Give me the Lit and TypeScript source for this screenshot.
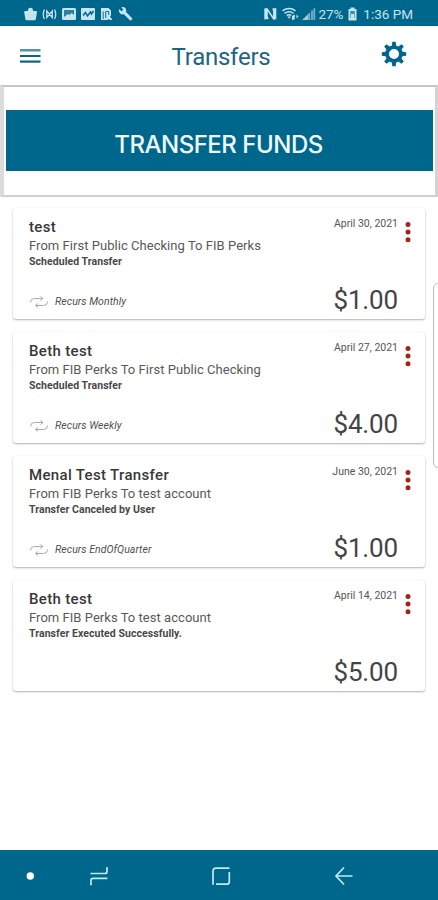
import { LitElement, html, css, svg, nothing } from "lit";
import { customElement, property } from "lit/decorators.js";

interface Transfer {
  name: string;
  route: string;
  status: string;
  date: string;
  amount: string;
  recurs?: string;
}

const TRANSFERS: Transfer[] = [
  { name: "test", route: "From First Public Checking To FIB Perks", status: "Scheduled Transfer", date: "April 30, 2021", amount: "$1.00", recurs: "Recurs Monthly" },
  { name: "Beth test", route: "From FIB Perks To First Public Checking", status: "Scheduled Transfer", date: "April 27, 2021", amount: "$4.00", recurs: "Recurs Weekly" },
  { name: "Menal Test Transfer", route: "From FIB Perks To test account", status: "Transfer Canceled by User", date: "June 30, 2021", amount: "$1.00", recurs: "Recurs EndOfQuarter" },
  { name: "Beth test", route: "From FIB Perks To test account", status: "Transfer Executed Successfully.", date: "April 14, 2021", amount: "$5.00" },
];

@customElement("status-bar")
class StatusBar extends LitElement {
  static styles = css`
    :host { display: flex; align-items: center; height: 26px; box-sizing: border-box; padding: 1px 25px 0 24px; background: #00678c; color: #c4e4f0; font: 13.500px/26px Roboto, sans-serif; }
    svg { display: block; flex: none; }
    .grow { flex: 1; }
    .pct { margin-left: 3px; letter-spacing: -0.1px; }
    .batt { margin-left: 5px; }
    .clock { margin-left: 6px; letter-spacing: 0; }
  `;
  render() {
    return html`
      <svg width="110" height="16" viewBox="24 5 110 16" fill="#c4e4f0">
        <path d="M28 10v-.8a2.500 2.500 0 0 1 5 0v.8h3q1 0 1 1.200l-1.200 7q-.2 1-1.200 1h-8q-1 0-1.200-1l-1.200-7q0-1.200 1-1.200z" />
        <g fill="none" stroke="#c4e4f0" stroke-width="1.300">
          <path d="M44.500 8.500q-2.500 5 0 9.500M54.500 8.500q2.500 5 0 9.500M46.800 10v6.500l5.500-6.500v6.500zM46.800 10l5.500 6.500" />
        </g>
        <rect x="62" y="7" width="14" height="12" rx="1.500" />
        <path d="M64 9h10v5l-2.500-2-2 2-1.500-1-4 3z" fill="#2b7f9f" />
        <path d="M65 16.500l2.500-2 2 1.200 2.500-2.200 2 2v1z" />
        <rect x="81" y="7" width="14" height="12" rx="1" />
        <path d="M83 14.500l2.500-3 2 3.500 3-4 1 2 2-3" fill="none" stroke="#00678c" stroke-width="1.500" />
        <path d="M101 7h7.500l2.500 2.500v5l-1 1 2.500 3.500h-2.500l-1.500-1-1 1h-6.500z" />
        <path d="M103.200 18v-7.500M105.700 17v-6.500h3v3.500" fill="none" stroke="#00678c" stroke-width="0.900" />
        <path d="M119 8l2.500 2.200 1.800-1.500-2.100-2.400q3-.7 4.500 1.300 1 1.800.4 3.500l6.500 6.700-2.200 2-6.500-6.500q-3 .7-4.500-1.700-.9-1.800-.4-3.600z" />
      </svg>
      <div class="grow"></div>
      <svg width="52" height="16" viewBox="264 5 52 16">
        <path d="M264.300 7.500l3-.5 5.700 8.500V10l-.8-2.500 4.100-.5v11l-2.800 1-5.700-8.500v5l1 2.500-4.500.5z" fill="#c4e4f0" />
        <g fill="none" stroke="#c4e4f0" stroke-width="1.500">
          <path d="M282.500 9.800q6.500-4.500 13 0M284.500 12.300q4.500-3 9 0M286.800 14.500q2.300-1.500 4.500 0" />
        </g>
        <path d="M287.500 15.500l1.700 2.200 1.800-2.200zM292 15l3-1.500-.5 5-2.500.500zM296.500 13.500l2 2-2 2z" fill="#c4e4f0" />
        <path d="M302 19l6.300-6v6z" fill="#c4e4f0" opacity=".8" />
        <path d="M309.300 12v7M312 9.500v9.500M314.300 7.200v11.800" stroke="#c4e4f0" stroke-width="1.800" opacity=".6" />
      </svg>
      <span class="pct">27%</span>
      <svg class="batt" width="9" height="14" viewBox="0 0 9 14"><path d="M2.500.5h4v1.500h2v11.500h-8v-11.500h2z" fill="#c4e4f0" /><path d="M2.300 4h4.400v7h-4.400z" fill="#3a8eab" /><path d="M3 7h3v4h-3z" fill="#c4e4f0" /></svg>
      <span class="clock">1:36 PM</span>
    `;
  }
}

@customElement("transfer-card")
class TransferCard extends LitElement {
  @property({ attribute: false }) item!: Transfer;
  static styles = css`
    :host { display: flex; box-sizing: border-box; height: 111px; padding: 9px 13px 0 16px; background: #fff; border-radius: 3px; box-shadow: 0 1px 2px rgba(0, 0, 0, 0.3), 0 0 2px rgba(0, 0, 0, 0.06); font-family: Roboto, sans-serif; color: #444; white-space: nowrap; }
    .left { flex: 1; display: flex; flex-direction: column; }
    .name { font-size: 15px; line-height: 20px; font-weight: 500; color: #383838; letter-spacing: 0.34px; }
    .route { font-size: 13px; line-height: 18px; color: #595959; letter-spacing: 0.04px; }
    .status { font-size: 10.500px; line-height: 14px; font-weight: 700; color: #484848; letter-spacing: 0.06px; }
    .recurs { display: flex; align-items: center; gap: 6px; margin-top: 26px; height: 14px; font-size: 10.500px; font-style: italic; color: #505050; letter-spacing: 0.04px; }
    .right { display: flex; flex-direction: column; align-items: flex-end; }
    .date { font-size: 10.500px; line-height: 14px; color: #555; }
    .amount { margin-top: 52px; font-size: 26px; line-height: 34px; color: #444; letter-spacing: -0.15px; }
    .more { margin: 3px 0 0 6px; }
    svg { display: block; }
  `;
  render() {
    const t = this.item;
    return html`
      <div class="left">
        <div class="name">${t.name}</div>
        <div class="route">${t.route}</div>
        <div class="status">${t.status}</div>
        ${t.recurs
          ? html`<div class="recurs">
              <svg width="20" height="12" viewBox="0 0 20 12" fill="none" stroke="#aaa" stroke-width="1">
                <path d="M1.500 6.500q0-4 4-4h8.500M11.500.5l2.500 2-2.500 2M18.500 5.500q0 4-4 4h-8M9 7.500l-2.500 2 2.500 2" />
              </svg>
              <span>${t.recurs}</span>
            </div>`
          : nothing}
      </div>
      <div class="right">
        <div class="date">${t.date}</div>
        <div class="amount">${t.amount}</div>
      </div>
      <svg class="more" width="8" height="24" viewBox="0 0 8 24" fill="#a3241c">
        ${[4.5, 12.1, 19.7].map((y) => svg`<circle cx="4" cy=${y} r="2.500" />`)}
      </svg>
    `;
  }
}

@customElement("app-root")
class AppRoot extends LitElement {
  static styles = css`
    :host { display: flex; flex-direction: column; position: relative; width: 438px; height: 900px; overflow: hidden; background: #fff; font-family: Roboto, sans-serif; }
    svg { display: block; }
    header { display: flex; align-items: center; justify-content: space-between; height: 59px; box-sizing: border-box; padding: 0 31px 0 20px; color: #0b6488; }
    h1 { margin: 3px 0 0 16px; font-size: 24px; font-weight: 400; line-height: 30px; color: #1d6584; letter-spacing: -0.25px; }
    .menu { width: 21px; margin-right: 4px; }
    .gear { margin-top: -4px; }
    .panel { box-sizing: border-box; height: 112px; border: solid #c6c6c6; border-width: 2px 3px 2px 4px; border-left-color: #dcdcdc; border-right-color: #d4d4d4; border-bottom-color: #cfcfcf; padding: 23px 2px 0; }
    .button { display: flex; align-items: center; justify-content: center; width: 427px; height: 61px; box-sizing: border-box; padding: 8px 2px 0 0; border: 0; background: #00678c; color: #eefaff; font: 500 24px/30px Inter, sans-serif; letter-spacing: -0.48px; }
    .list { flex: 1; display: flex; flex-direction: column; gap: 13.200px; padding: 10.500px 13px 0; }
    .handle { position: absolute; left: 433px; top: 283px; width: 12px; height: 185px; box-sizing: border-box; border: 1px solid #bbb; border-radius: 5px; background: #fff; }
    nav { height: 50px; background: #00678c; }
  `;
  render() {
    const teeth = [0, 45, 90, 135, 180, 225, 270, 315];
    return html`
      <status-bar></status-bar>
      <header>
        <svg class="menu" width="21" height="16" viewBox="0 0 21 16" fill="#0b6488">
          <rect y="1" width="20.500" height="2.500" opacity=".7" /><rect y="7" width="20.500" height="2" /><rect y="12.500" width="20.500" height="2.200" />
        </svg>
        <h1>Transfers</h1>
        <svg class="gear" width="26" height="26" viewBox="-13 -13 26 26" fill="#00678c">
          <circle r="6.900" fill="none" stroke="#00678c" stroke-width="3.800" />
          ${teeth.map((a) => svg`<path d="M-2.200-8l.5-4.200h3.400l.5 4.200z" transform="rotate(${a})" />`)}
        </svg>
      </header>
      <section class="panel"><button class="button">TRANSFER FUNDS</button></section>
      <main class="list">${TRANSFERS.map((t) => html`<transfer-card .item=${t}></transfer-card>`)}</main>
      <div class="handle"></div>
      <nav>
        <svg width="438" height="50" viewBox="0 850 438 50" fill="none" stroke="#c4e9f3" stroke-width="1.700">
          <circle cx="30.300" cy="876" r="3.700" fill="#fff" stroke="none" />
          <path d="M90.500 873.500h14.500q2 0 2-2v-4.500M107.500 878.300h-14.500q-2 0-2 2v5" />
          <path d="M229.500 868.200h-13.500q-3 0-3 3v13.500M216 884.200h10.500q2.800 0 2.800-2.800v-9.500" />
          <path d="M352.500 876h-16M344 867.500l-8 8.500 8 8.500" />
        </svg>
      </nav>
    `;
  }
}
